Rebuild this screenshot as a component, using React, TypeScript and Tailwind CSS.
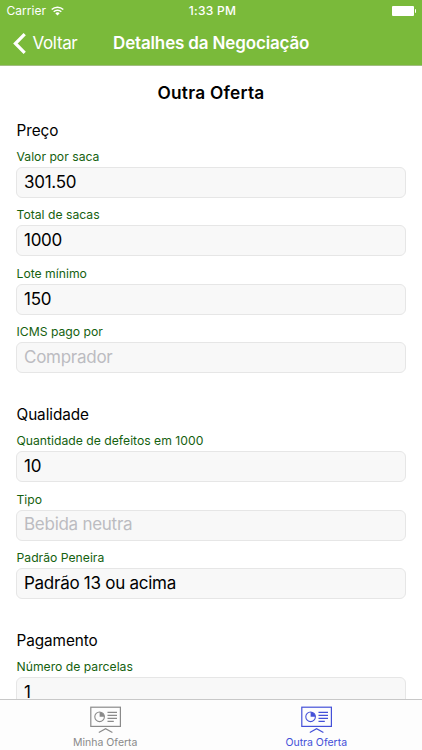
import React from "react";

type FieldData = { label: string; value: string; placeholder?: boolean };
type SectionData = { title: string; fields: FieldData[] };

const sections: SectionData[] = [
  {
    title: "Preço",
    fields: [
      { label: "Valor por saca", value: "301.50" },
      { label: "Total de sacas", value: "1000" },
      { label: "Lote mínimo", value: "150" },
      { label: "ICMS pago por", value: "Comprador", placeholder: true },
    ],
  },
  {
    title: "Qualidade",
    fields: [
      { label: "Quantidade de defeitos em 1000", value: "10" },
      { label: "Tipo", value: "Bebida neutra", placeholder: true },
      { label: "Padrão Peneira", value: "Padrão 13 ou acima" },
    ],
  },
  {
    title: "Pagamento",
    fields: [{ label: "Número de parcelas", value: "1" }],
  },
];

function Field({ label, value, placeholder }: FieldData) {
  return (
    <div className="h-[58.4px]">
      <div className="h-5 whitespace-nowrap pl-[0.5px] text-[12.2px] leading-5 text-[#15610f]">{label}</div>
      <div
        className={`flex h-[31px] items-center whitespace-nowrap rounded-[6px] border border-[#e6e6e6] bg-[#f8f8f8] pl-[7px] text-[17px] tracking-[-0.27px] ${
          placeholder ? "text-[#bcbcc1]" : "text-black"
        }`}
      >
        {value}
      </div>
    </div>
  );
}

function BoardIcon() {
  return (
    <svg width="32" height="28" viewBox="0 0 32 28" fill="none" stroke="currentColor" strokeWidth="1.2">
      <rect x="0.8" y="1.2" width="29.6" height="19.2" />
      <circle cx="9.6" cy="10.8" r="4.8" strokeWidth="1.1" />
      <path d="M9.6 10.8V6a4.8 4.8 0 0 1 4.8 4.8z" fill="currentColor" stroke="none" />
      <path d="M17.5 6.4h9.5M17.5 9.4h9.5M17.5 12.4h9.5M17.5 15.4h6.3" strokeWidth="1.1" />
      <path d="M8.8 26.6l6.8-3.8 6.8 3.8" />
    </svg>
  );
}

function Tab({ label, color }: { label: string; color: string }) {
  return (
    <div className={`flex flex-1 flex-col items-center pt-[6px] ${color}`}>
      <BoardIcon />
      <span className="mt-[1px] whitespace-nowrap pr-[0.5px] text-[10.5px] leading-[15px]">{label}</span>
    </div>
  );
}

export default function App() {
  return (
    <div className="flex h-[750px] w-[422px] flex-col overflow-hidden bg-white font-['Inter',sans-serif]">
      <header className="flex h-[66px] shrink-0 flex-col border-b border-[#a2bd80] bg-[#7aba3a] text-white">
        <div className="grid h-[22px] grid-cols-3 items-center text-[12px]">
          <div className="flex items-center pl-[6.5px]">
            <span className="tracking-[0.05px]">Carrier</span>
            <svg className="ml-[5px]" width="13" height="10" viewBox="0 0 13 10" fill="none" stroke="white" strokeWidth="1.5">
              <path d="M0.7 3.5a8.3 8.3 0 0 1 11.6 0M2.7 5.7a5.4 5.4 0 0 1 7.6 0" />
              <path d="M4.3 7.2a3.2 3.2 0 0 1 4.4 0L6.5 9.4z" fill="white" stroke="none" />
            </svg>
          </div>
          <span className="pl-[3px] text-center font-medium tracking-[0.25px]">1:33 PM</span>
          <div className="flex items-center justify-end pr-[6px]">
            <span className="h-[10px] w-[22px] rounded-[1px] bg-white" />
            <span className="ml-[1px] h-[4px] w-[1.5px] rounded-r bg-white" />
          </div>
        </div>
        <div className="grid flex-1 grid-cols-[113px_1fr] items-center">
          <div className="flex items-center pl-[13px]">
            <svg width="13" height="21" viewBox="0 0 13 21" fill="none" stroke="white" strokeWidth="3.2">
              <path d="M11.7 1.2L2.4 10.5l9.3 9.3" />
            </svg>
            <span className="ml-[6.5px] text-[17px] tracking-[-0.35px]">Voltar</span>
          </div>
          <h1 className="whitespace-nowrap text-[17px] font-semibold tracking-[-0.15px]">Detalhes da Negociação</h1>
        </div>
      </header>
      <main className="flex-1 overflow-hidden px-[16px]">
        <h2 className="mt-[15px] h-6 text-center text-[17.3px] font-semibold leading-6 tracking-[0.25px]">Outra Oferta</h2>
        <div className="mt-[11.5px]">
          {sections.map((s) => (
            <section key={s.title} className="mb-[20.2px]">
              <h3 className="h-[30.5px] pl-[0.5px] text-[15.3px] leading-[27px] tracking-[-0.06px]">{s.title}</h3>
              {s.fields.map((f) => (
                <Field key={f.label} {...f} />
              ))}
            </section>
          ))}
        </div>
      </main>
      <nav className="flex h-[51px] shrink-0 border-t border-[#c8c8c8] bg-[#fdfdfd]">
        <Tab label="Minha Oferta" color="text-[#8a8a8a]" />
        <Tab label="Outra Oferta" color="text-[#4450d8]" />
      </nav>
    </div>
  );
}
